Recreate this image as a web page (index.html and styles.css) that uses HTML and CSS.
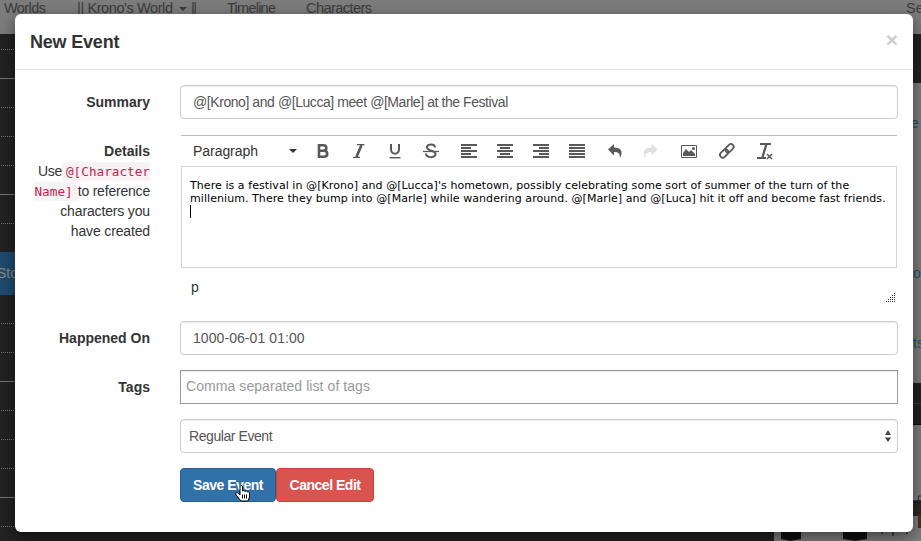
FILE: index.html
```html
<!DOCTYPE html>
<html lang="en">
<head>
<meta charset="utf-8">
<title>New Event</title>
<link rel="stylesheet" href="styles.css">
</head>
<body>
<div class="backdrop">
  <nav class="topnav">
    <svg class="navtext" width="921" height="34">
      <text x="4" y="13" textLength="42">Worlds</text>
      <text x="77" y="13" textLength="96">|| Krono's World</text>
      <path d="M179 7h8l-4 4z"/>
      <text x="191" y="13" textLength="6">||</text>
      <text x="227" y="13" textLength="49">Timeline</text>
      <text x="306" y="13" textLength="66">Characters</text>
      <text x="906" y="13">Se</text>
    </svg>
  </nav>
  <div class="columns">
    <aside class="rail">
      <div class="rows top"></div>
      <div class="story">Sto</div>
      <div class="rows bottom"></div>
    </aside>
    <div class="dark"></div>
    <svg class="side" width="147" height="507" viewBox="774 34 147 507">
      <path fill="#7d7d7d" d="M774 34h147v507H774z"/>
      <path fill="#222" d="M774 34h147v49H774zM774 383h147v42H774z"/>
      <path stroke="#404040" d="M774 403.500h147"/><path stroke="#080808" d="M774 424.500h147"/>
      <path fill="#101010" d="M781 531h20v8l-11 2-9-2zM843 531h24v8l-12 2-12-2z"/>
      <path fill="#30281c" d="M900 503l21-2v15h-8l-6 2z"/>
      <path fill="#20242c" d="M900 501l21-1v4l-21 2z"/>
      <path fill="#463522" d="M918 515h3v13h-3z"/>
      <path fill="none" stroke="#333" d="M918.500 501v-5h3"/>
      <path stroke="#3d3022" stroke-width="1.500" fill="none" d="M882 531v3M893 531v5M907 531v3"/>
      <g class="sidelinks"><text x="911" y="128">e</text><text x="913" y="278">o</text><text x="913" y="348">ts</text></g>
    </svg>
  </div>
</div>

<main class="modal">
  <header class="modal-header"><h4>New Event</h4><span class="close">×</span></header>
  <form class="form">
    <div class="row">
      <label>Summary</label>
      <div class="control"><span class="tight">@[Krono] and @[Lucca] meet @[Marle] at the Festival</span></div>
    </div>
    <div class="row details">
      <div class="help"><label>Details</label>
        <div><span class="use">Use</span><code class="c1">@[Character</code></div>
        <div><code class="c2">Name]</code><span class="ref">to reference</span></div>
        <div class="narrow">characters you</div>
        <div class="narrow">have created</div>
      </div>
      <div class="editor">
        <div class="toolbar">
          <svg width="716" height="31" viewBox="181 135 716 31">
            <g fill="#595959" stroke="none">
              <text class="para" x="193" y="156" textLength="65">Paragraph</text>
              <path d="M289 149h8l-4 4z" fill="#333"/>
              <g fill="none" stroke="#595959" stroke-width="2.600"><path d="M319 145.300h4.300c4 0 4 5.500 0 5.500H319h5c4.300 0 4.300 6 0 6H319zM319 144v14"/></g>
              <g fill="none" stroke="#595959"><path stroke-width="1.300" d="M357 144.700h7.500M353 157.300h7"/><path stroke-width="2.600" d="M361.500 145l-5 12"/>
              <path stroke-width="2" d="M391 144v5.500c0 5.500 8 5.500 8 0V144"/><path stroke-width="1.400" d="M389.500 157.700h11"/>
              <path stroke-width="2" d="M435 147.500c0-4-8-4-8-.5 0 4.500 8.500 3 8.500 7 0 4.500-9.500 4-9.500-.5"/><path stroke-width="1.300" d="M423 151.500h16"/></g>
              <path d="M461 144h16v2h-16zM461 147h10v2h-10zM461 150h16v2h-16zM461 153h10v2h-10zM461 156h16v2h-16z"/>
              <path d="M497 144h16v2h-16zM500 147h10v2h-10zM497 150h16v2h-16zM500 153h10v2h-10zM497 156h16v2h-16z"/>
              <path d="M533 144h16v2h-16zM539 147h10v2h-10zM533 150h16v2h-16zM539 153h10v2h-10zM533 156h16v2h-16z"/>
              <path d="M569 144h16v2h-16zM569 147h16v2h-16zM569 150h16v2h-16zM569 153h16v2h-16zM569 156h16v2h-16z"/>
              <path d="M608 149.500l6-5.500v3.500c7 0 9.500 4 6 10.500 0-4.500-1.500-6-6-6v3.500z"/>
              <path fill="#e0e0e0" d="M657.500 149.500l-6-5.500v3.500c-7 0-9.500 4-6 10.500 0-4.500 1.500-6 6-6v3.500z"/>
              <path fill="none" stroke="#595959" d="M681.500 145.500h15v12h-15z"/><path d="M683 156v-3l3-4 3 3 2-2 4 4v2z"/><circle cx="693.500" cy="148.500" r="1.500"/>
              <g transform="rotate(-45 727 151)" fill="none" stroke="#595959" stroke-width="1.800"><rect x="718.500" y="148" width="9.500" height="5.500" rx="2.750"/><rect x="726" y="148" width="9.500" height="5.500" rx="2.750"/></g>
              <path fill="none" stroke="#595959" stroke-width="1.800" d="M760 144h11M757 158h9"/><path fill="none" stroke="#595959" stroke-width="2.300" d="M766.500 144l-4 13"/><path fill="none" stroke="#595959" stroke-width="1.500" d="M767 154l5 5M772 154l-5 5"/>
            </g>
          </svg>
        </div>
        <div class="textarea"><div>There is a festival in @[Krono] and @[Lucca]'s hometown, possibly celebrating some sort of summer of the turn of the</div><div>millenium. There they bump into @[Marle] while wandering around. @[Marle] and @[Luca] hit it off and become fast friends.</div><i class="caret"></i></div>
        <div class="status"><span>p</span>
          <svg width="10" height="10" shape-rendering="crispEdges"><path fill="none" stroke="#333" stroke-dasharray="1 1" d="M9.500 0v10M7.500 2v8M5.500 4v6M3.500 6v4M1.500 8v2"/></svg>
        </div>
      </div>
    </div>
    <div class="row"><label>Happened On</label><div class="control"><span class="wide">1000-06-01 01:00</span></div></div>
    <div class="row"><label>Tags</label><div class="control tags"><span class="wide">Comma separated list of tags</span></div></div>
    <div class="row"><span></span><div class="control select"><span class="tight">Regular Event</span><svg width="6" height="12"><path fill="#444" d="M0 5h6L3 0zM0 7.500h6l-3 4.500z"/></svg></div></div>
    <div class="row"><span></span><div class="buttons"><button type="button" class="save">Save Event</button><button type="button" class="cancel">Cancel Edit</button></div></div>
  </form>
</main>
<svg class="pointer" width="16" height="18" viewBox="0 0 16 18"><path fill="#fff" stroke="#000" d="M5 10V2c0-2 2.500-2 2.500 0v4c1-1 2.500-.5 2.500.5 1-1 2.500-.5 2.500.5 1-.5 2 0 2 1v4l-1.500 4H6L1 10c-1-2 1-3 2-2z"/><path stroke="#000" d="M7.500 9.500v4M9.500 9.500v4M11.500 9.500v4"/></svg>
</body>
</html>
```
FILE: styles.css
```css
* { box-sizing: border-box; }
body { margin: 0; width: 921px; height: 541px; overflow: hidden; font: 14px/20px "Liberation Sans", Arial, sans-serif; color: #333; position: relative; }
.backdrop { position: absolute; inset: 0; background: #222; }
.topnav { height: 34px; background: #7c7c7c; }
.navtext { display: block; font-size: 14.500px; fill: #3b3b3b; }
.columns { display: flex; height: 507px; }
.rail { width: 15px; background: #222; overflow: hidden; }
.rows { background-image: linear-gradient(#777, #777), linear-gradient(#777, #777), repeating-linear-gradient(90deg, #222 0 1px, transparent 1px 2px), linear-gradient(#222 28px, #777 28px); background-size: 15px 1px, 15px 1px, auto, 15px 29px; background-repeat: no-repeat, no-repeat, repeat, repeat; }
.rows.top { height: 218px; background-position: 0 44px, 0 160px, 0 0, 0 -13px; }
.rows.bottom { height: 246px; background-position: 0 86px, 0 202px, 0 0, 0 0; }
.story { height: 43px; background: #204a6f; color: #8b8b8b; line-height: 42px; text-indent: -3px; }
.dark { flex: 1; }
.sidelinks { fill: #24507a; font-size: 14px; }
.modal { position: absolute; left: 15px; top: 14px; width: 898px; height: 518px; background: #fff; border-radius: 6px; box-shadow: 0 5px 15px rgba(0,0,0,.5); }
.modal-header { height: 56px; border-bottom: 1px solid #e5e5e5; display: flex; justify-content: space-between; padding: 15px; }
h4 { margin: 0; font-size: 18px; line-height: 26px; letter-spacing: -.2px; }
.close { font-size: 21px; font-weight: bold; color: #ccc; line-height: 21px; }
.form { padding: 15px; }
.row { display: grid; grid-template-columns: 120px 718px; column-gap: 30px; margin-bottom: 15px; }
label { display: block; font-weight: bold; text-align: right; padding-top: 7px; }
.control { height: 34px; border: 1px solid #ccc; border-radius: 4px; padding: 0 12px; line-height: 32px; color: #555; box-shadow: inset 0 1px 1px rgba(0,0,0,.075); white-space: nowrap; }
.tight { letter-spacing: -.43px; }
.wide { letter-spacing: .07px; }
.tags { border-color: #999; border-radius: 0; padding: 0 5px; color: #999; line-height: 30px; }
.select { display: flex; align-items: center; justify-content: space-between; padding: 0 6px 0 8px; }
.details { height: 172px; }
.help { text-align: right; white-space: nowrap; }
.help > div { height: 20px; }
.help .narrow { letter-spacing: -.15px; }
.use { letter-spacing: -.3px; }
.ref { letter-spacing: -.2px; }
code { font-family: "DejaVu Sans Mono", Menlo, monospace; font-size: 12.700px; color: #c7254e; background: #f9f2f4; padding: 2px 0 2px 4px; border-radius: 4px 0 0 4px; }
.c2 { padding: 2px 5px 2px 0; border-radius: 0 4px 4px 0; }
.editor { margin: 1px 1px 0; }
.toolbar { border-top: 1px solid #bbb; height: 31px; }
.toolbar svg { display: block; margin-top: -1px; }
.para { font-size: 14px; fill: #333; }
.textarea { height: 102px; border: 1px solid #d4d4d4; padding: 12px 8px; font: 11px/13px "DejaVu Sans", Verdana, sans-serif; letter-spacing: .065px; color: #000; white-space: nowrap; }
.caret { display: block; width: 1px; height: 13px; background: #000; }
.status { display: flex; justify-content: space-between; height: 36px; padding: 9px 2px 0 10px; }
.status svg { margin-top: 16px; }
.buttons { display: flex; }
button { height: 34px; border: 1px solid #285e8e; border-radius: 4px; background: #3071a9; color: #fff; font: bold 14px/20px "Liberation Sans", Arial, sans-serif; padding: 0; letter-spacing: -.48px; }
.save { width: 96px; }
.cancel { width: 98px; background: #d9534f; border-color: #d43f3a; }
.pointer { position: absolute; left: 235px; top: 485px; }
```
